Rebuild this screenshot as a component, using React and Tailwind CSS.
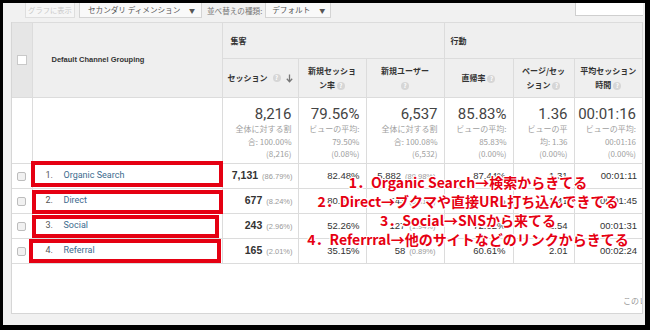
import React from 'react';

const jp = 'font-["Noto_Sans_CJK_JP",sans-serif]';

const totals = [
  ['8,216', '全体に対する割', '合: 100.00%', '(8,216)'],
  ['79.56%', 'ビューの平均:', '79.50%', '(0.08%)'],
  ['6,537', '全体に対する割', '合: 100.08%', '(6,532)'],
  ['85.83%', 'ビューの平均:', '85.83%', '(0.00%)'],
  ['1.36', 'ビューの平', '均: 1.36', '(0.00%)'],
  ['00:01:16', 'ビューの平均:', '00:01:16', '(0.00%)'],
];

const rows = [
  { n: '1.', name: 'Organic Search', s: '7,131', sp: '(86.79%)', nr: '82.48%', nu: '5,882', nup: '(89.98%)', br: '87.44%', pv: '1.31', t: '00:01:11' },
  { n: '2.', name: 'Direct', s: '677', sp: '(8.24%)', nr: '80.21%', nu: '543', nup: '(8.31%)', br: '85.38%', pv: '1.41', t: '00:01:45' },
  { n: '3.', name: 'Social', s: '243', sp: '(2.96%)', nr: '52.26%', nu: '127', nup: '(1.94%)', br: '72.02%', pv: '1.54', t: '00:01:31' },
  { n: '4.', name: 'Referral', s: '165', sp: '(2.01%)', nr: '35.15%', nu: '58', nup: '(0.89%)', br: '60.61%', pv: '2.01', t: '00:02:24' },
];

const notes = [
  '1．Organic Search→検索からきてる',
  '2．Direct→ブクマや直接URL打ち込んできてる',
  '3．Social→SNSから来てる',
  '4．Referrral→他のサイトなどのリンクからきてる',
];

const Help = () => (
  <span className="inline-flex items-center justify-center w-[8px] h-[8px] rounded-full bg-[#d6d6d6] text-white text-[6px] leading-none font-bold align-middle">
    ?
  </span>
);

const RowCheck = () => (
  <span className="block mx-auto w-[9px] h-[9px] border border-[#bdbdbd] rounded-[2px] bg-[#f1f1f1]" />
);

const App = () => {
  const cell = 'border border-[#dcdcdc]';

  return (
    <div className="relative w-[650px] h-[330px] bg-black pt-[3px] pl-[3px] pr-[5px] pb-[5px] overflow-hidden">
      <div className={`h-full bg-[#f1f1f1] flex flex-col pl-[8px] pr-[2px] pb-[11px] ${jp}`}>
        {/* toolbar */}
        <div className="h-[19px] flex items-start text-[7.6px] text-[#666] shrink-0 whitespace-nowrap">
          <div className="ml-[14px] w-[50px] h-[15px] flex items-center justify-center border-x border-b border-[#dedede] bg-[#f6f6f6] text-[#cacaca] text-[7.3px] overflow-hidden">
            グラフに表示
          </div>
          <div className="ml-[4px] w-[123px] h-[15px] flex items-center pl-[8px] pr-[6px] border-x border-b border-[#d4d4d4] bg-[#f9f9f9] text-[#555]">
            <span>セカンダリ ディメンション</span>
            <span className="ml-auto text-[6px]">▼</span>
          </div>
          <div className="ml-[5px] h-[15px] flex items-center text-[#777]">並べ替えの種類:</div>
          <div className="ml-[3px] w-[66px] h-[15px] flex items-center pl-[6px] pr-[5px] border-x border-b border-[#d4d4d4] bg-[#f9f9f9] text-[#555]">
            <span>デフォルト</span>
            <span className="ml-auto text-[6px]">▼</span>
          </div>
          <div className="ml-auto w-[68px] h-[13px] bg-white border-l border-b border-[#cfcfcf]" />
        </div>

        {/* report panel */}
        <div className="flex-1 flex flex-col bg-white border-x border-b border-[#d6d6d6] overflow-hidden">
          <table className="table-fixed border-collapse w-[630px]">
            <colgroup>
              <col className="w-[20px]" />
              <col className="w-[190px]" />
              <col className="w-[76px]" />
              <col className="w-[68px]" />
              <col className="w-[78px]" />
              <col className="w-[69px]" />
              <col className="w-[61px]" />
              <col className="w-[68px]" />
            </colgroup>
            <thead className="text-[#333]">
              <tr className="h-[36px]">
                <th rowSpan={2} className={`${cell} border-l-0 bg-[#e6e6e6]`}>
                  <span className="block mx-auto w-[10px] h-[10px] border border-[#c9c9c9] bg-white" />
                </th>
                <th rowSpan={2} className={`${cell} bg-[#efefef] text-left pl-[19px] font-["Liberation_Sans",sans-serif] text-[7.5px] font-bold`}>
                  Default Channel Grouping
                </th>
                <th colSpan={3} className={`${cell} bg-[#efefef] text-left pl-[8px] text-[8px] font-bold`}>
                  集客
                </th>
                <th colSpan={3} className={`${cell} border-r-0 bg-[#efefef] text-left pl-[6px] text-[8px] font-bold`}>
                  行動
                </th>
              </tr>
              <tr className="h-[39px] text-[8px] font-bold leading-[14px]">
                <th className={`${cell} bg-[#efefef]`}>
                  <div className="flex items-center justify-center gap-[5px]">
                    <span>セッション</span>
                    <Help />
                    <svg width="7" height="9" viewBox="0 0 7 9" className="text-[#777]">
                      <path d="M3.5 0.5v7M0.8 4.8l2.7 2.9 2.7-2.9" fill="none" stroke="currentColor" strokeWidth="1.3" />
                    </svg>
                  </div>
                </th>
                <th className={`${cell} bg-[#efefef]`}>
                  新規セッショ<br />ン率 <Help />
                </th>
                <th className={`${cell} bg-[#efefef]`}>
                  新規ユーザー<br /><Help />
                </th>
                <th className={`${cell} bg-[#efefef]`}>
                  直帰率 <Help />
                </th>
                <th className={`${cell} bg-[#efefef]`}>
                  ページ/セッ<br />ション <Help />
                </th>
                <th className={`${cell} border-r-0 bg-[#efefef]`}>
                  平均セッション<br />時間 <Help />
                </th>
              </tr>
            </thead>
            <tbody>
              <tr className="h-[66px]">
                <td className={`${cell} border-l-0`} />
                <td className={cell} />
                {totals.map((c, i) => (
                  <td key={i} className={`${cell} ${i === 5 ? 'border-r-0' : ''} align-top text-right pr-[6px] pt-[7px]`}>
                    <div className='font-["Roboto",sans-serif] text-[15px] leading-[18px] text-[#444]'>{c[0]}</div>
                    <div className="text-[8px] leading-[12.5px] text-[#a0a0a0]">
                      <div>{c[1]}</div>
                      <div>{c[2]}</div>
                      <div>{c[3]}</div>
                    </div>
                  </td>
                ))}
              </tr>
              {rows.map((r) => (
                <tr key={r.n} className='h-[25px] font-["Liberation_Sans",sans-serif] text-[9.5px] text-[#333]'>
                  <td className={`${cell} border-l-0`}>
                    <RowCheck />
                  </td>
                  <td className={`${cell} pl-[13px]`}>
                    <div className='flex items-center font-["Roboto",sans-serif] text-[9px]'>
                      <span className="w-[18px] text-[#555]">{r.n}</span>
                      <span className="text-[#3d6b8e]">{r.name}</span>
                    </div>
                  </td>
                  <td className={`${cell} text-right pr-[5px] whitespace-nowrap`}>
                    <span className="font-bold text-[10.5px]">{r.s}</span>
                    <span className="ml-[4px] text-[7.5px] text-[#999]">{r.sp}</span>
                  </td>
                  <td className={`${cell} text-right pr-[6px]`}>{r.nr}</td>
                  <td className={`${cell} text-right pr-[8px] whitespace-nowrap`}>
                    {r.nu}
                    <span className="ml-[4px] text-[7.5px] text-[#999]">{r.nup}</span>
                  </td>
                  <td className={`${cell} text-right pr-[7px]`}>{r.br}</td>
                  <td className={`${cell} text-right pr-[6px]`}>{r.pv}</td>
                  <td className={`${cell} border-r-0 text-right pr-[5px]`}>{r.t}</td>
                </tr>
              ))}
            </tbody>
          </table>
          <div className="flex-1 flex flex-col justify-end pb-[6px]">
            <div className="pl-[611px] whitespace-nowrap text-[8px] text-[#999]">このレ</div>
          </div>
        </div>
      </div>

      {/* red annotation boxes */}
      <div className="absolute left-[31px] top-[161px] w-[192px] h-[26px] border-4 border-[#e50012]" />
      <div className="absolute left-[32px] top-[190px] w-[191px] h-[24px] border-4 border-[#e50012]" />
      <div className="absolute left-[32px] top-[215px] w-[187px] h-[23px] border-4 border-[#e50012]" />
      <div className="absolute left-[29px] top-[239px] w-[192px] h-[24px] border-4 border-[#e50012]" />

      {/* red annotation text */}
      <div className={`absolute left-[298px] top-[173px] w-[340px] text-center text-[14px] leading-[19px] font-bold text-[#e60012] whitespace-nowrap ${jp} [text-shadow:-1px_-1px_0_#fff,1px_-1px_0_#fff,-1px_1px_0_#fff,1px_1px_0_#fff,0_1px_0_#fff,0_-1px_0_#fff,1px_0_0_#fff,-1px_0_0_#fff]`}>
        {notes.map((n) => (
          <div key={n}>{n}</div>
        ))}
      </div>
    </div>
  );
};

export default App;
